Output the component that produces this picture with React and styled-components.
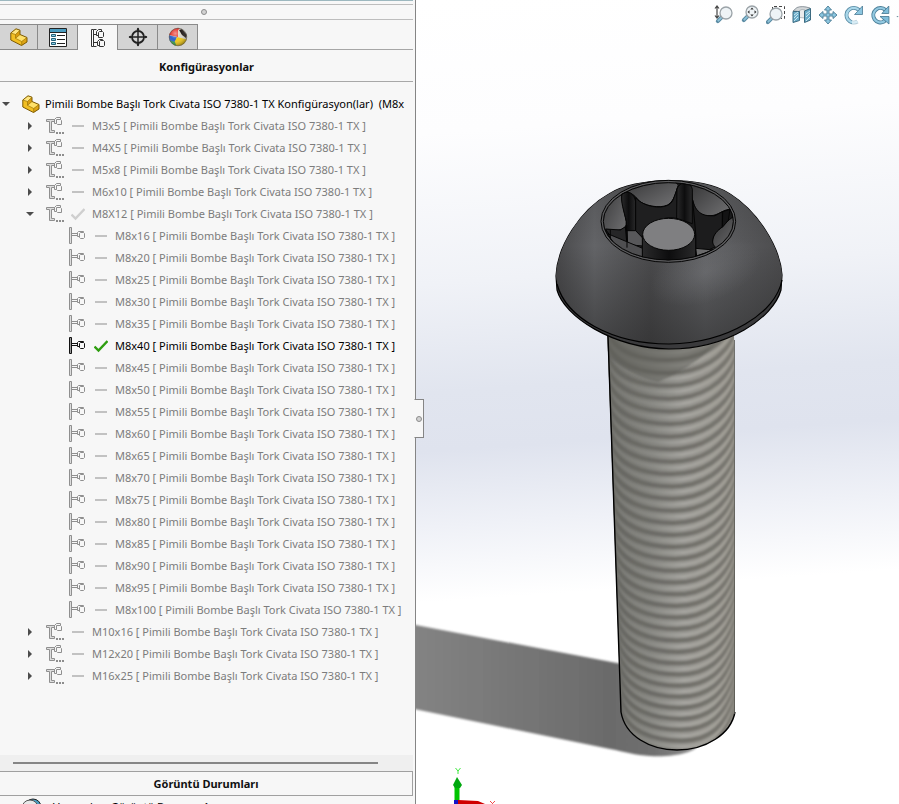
import React, { useState } from "react";
import styled, { createGlobalStyle } from "styled-components";

const Global = createGlobalStyle`
  * { box-sizing: border-box; }
  html, body, #root { height: 100%; }
  body {
    margin: 0;
    overflow: hidden;
    background: #fff;
    font: 11px/22px "Noto Sans", "Open Sans", sans-serif;
    color: #000;
  }
  button { font: inherit; color: inherit; padding: 0; margin: 0; border: 0; background: none; cursor: pointer; }
`;

const Window = styled.div`
  display: flex;
  height: 100vh;
  min-height: 480px;
`;

const Panel = styled.aside`
  position: relative;
  flex: 0 0 416px;
  display: flex;
  flex-direction: column;
  min-width: 0;
  padding-right: 2px;
  background: #f7f7f7;
  border-right: 1px solid #858585;
`;

const TopEdge = styled.div`
  flex: none;
  height: 5px;
  border-top: 1px solid #9db8bf;
  border-bottom: 1px solid #bdbdbd;
`;

const Grip = styled.div`
  flex: none;
  display: flex;
  align-items: center;
  justify-content: center;
  height: 15px;
  padding-right: 6px;
  border-bottom: 1px solid #bdbdbd;
`;

const GripDot = styled.span`
  width: 6px;
  height: 6px;
  border: 1px solid #8c8c8c;
  border-radius: 50%;
  background: #d2d2d2;
`;

const TabBar = styled.div`
  flex: none;
  display: flex;
  height: 30px;
  padding-top: 4px;
  background: linear-gradient(#a6a6a6, #a6a6a6) bottom / 100% 1px no-repeat;
`;

const Tab = styled.button`
  display: flex;
  align-items: center;
  justify-content: center;
  width: ${(p) => (p.$first ? 38 : 40)}px;
  border-top: 1px solid #8a8a8a;
  border-right: 1px solid #8a8a8a;
  border-bottom: ${(p) => (p.$active ? 0 : 1)}px solid #8a8a8a;
  background: ${(p) => (p.$active ? "#f7f7f7" : "#d4d4d4")};
`;

const PanelTitle = styled.h2`
  flex: none;
  margin: 0;
  height: 32px;
  font-size: 11px;
  line-height: 34px;
  font-weight: 700;
  text-align: center;
  color: #111;
  border-bottom: 1px solid #a8a8a8;
`;

const TreeArea = styled.div`
  flex: 1 1 0;
  min-height: 0;
  overflow: hidden;
  padding-top: 11px;
`;

const Branch = styled.ul`
  list-style: none;
  margin: 0;
  padding: 0;
`;

const Row = styled.div`
  display: flex;
  align-items: center;
  height: 22px;
  padding-left: ${(p) => [0, 24, 47][p.$depth]}px;
  white-space: pre;
  color: ${(p) => (p.$strong ? "#000" : "#7c7c7c")};
`;

const Toggle = styled.button`
  flex: none;
  display: flex;
  align-items: center;
  justify-content: center;
  width: 12px;
  height: 16px;
`;

const IconSlot = styled.span`
  flex: none;
  display: flex;
  width: 18px;
  margin-left: 10px;
`;

const ToggleSpace = styled.span`
  flex: none;
  width: 12px;
`;

const MarkSlot = styled.span`
  flex: none;
  display: flex;
  width: 14px;
  margin-left: 7px;
`;

const Label = styled.span`
  margin-left: ${(p) => (p.$root ? 5 : 7)}px;
`;

const ScrollTrack = styled.div`
  flex: none;
  height: 16px;
  padding: 7px 35px 0 13px;
  background: #efefef;
`;

const ScrollThumb = styled.div`
  height: 2px;
  background: #858585;
`;

const DisplayTitle = styled.h2`
  flex: none;
  margin: 0;
  height: 25px;
  font-size: 11px;
  line-height: 24px;
  font-weight: 700;
  text-align: center;
  color: #111;
  border: 1px solid #a0a0a0;
  border-left: 0;
`;

const DisplayRow = styled.div`
  flex: none;
  display: flex;
  gap: 12px;
  height: 8px;
  padding: 1px 0 0 21px;
  line-height: 20px;
  overflow: hidden;
`;

const Splitter = styled.button`
  position: absolute;
  top: 399px;
  right: -9px;
  z-index: 2;
  display: flex;
  align-items: center;
  justify-content: center;
  width: 10px;
  height: 39px;
  border: 1px solid #858585;
  border-left: 1px solid #f7f7f7;
  background: #f7f7f7;
`;

const Viewport = styled.main`
  position: relative;
  flex: 1 1 0;
  min-width: 0;
  overflow: hidden;
  background: linear-gradient(176deg, #fff 0%, #fdfdfe 16%, #f0f2f7 34%, #e1e5ef 47%, #dfe3ee 54%, #eff1f7 63%, #fff 72%);
`;

const Scene = styled.svg`
  position: absolute;
  inset: 0;
  width: 100%;
  height: 100%;
`;

const ViewTools = styled.div`
  position: relative;
  display: flex;
  justify-content: flex-end;
  gap: 6px;
  padding-top: 5px;
`;

const ToolButton = styled.button`
  display: flex;
  width: 20px;
  height: 20px;
`;

const MoreTools = styled.button`
  display: flex;
  width: 3px;
  height: 20px;
  overflow: hidden;
`;

/* ---------- panel icons ---------- */

function PartIcon() {
  return (
    <svg width="18" height="18" viewBox="0 0 18 18" strokeLinejoin="round">
      <path d="M.8 5 6 .800l4 1.400v4.300l7 3v4.500l-5.500 3.500L.800 12z" fill="#f2bf22" />
      <path d="M.8 5 6 .800l4 1.400L5.500 6.500z" fill="#ffe680" />
      <path d="m5.500 10.300 4.500-3.800 7 3-5.300 4z" fill="#ffe16a" />
      <path d="M5.500 6.500 10 2.200v4.300l-4.500 3.800z" fill="#d99d10" />
      <path d="M11.700 13.500 17 9.500V14l-5.500 3.500z" fill="#dda415" />
      <path d="M.8 5 6 .800l4 1.400v4.300l7 3v4.500l-5.500 3.500L.800 12z" fill="none" stroke="#7c5a05" />
      <path d="M.8 5l4.700 1.500L10 2.200M5.500 6.500v3.800l6.200 3.200v4M11.700 13.500 17 9.500M5.500 10.300 10 6.500" fill="none" stroke="#9b7408" strokeWidth=".7" />
    </svg>
  );
}

function PropertyIcon() {
  return (
    <svg width="18" height="19" viewBox="0 0 18 19">
      <path d="M.5.500h17v18H.500z" fill="#fff" stroke="#222" />
      <path d="M1 1h16v3H1z" fill="#4a9cc0" />
      <path d="M0 4h18v1H0z" fill="#222" />
      <g fill="#8ed0e6" stroke="#235f78">
        <path d="M2.500 6.500h4v2h-4zM2.500 10.500h4v2h-4zM2.500 14.500h4v2h-4z" />
      </g>
      <path d="M8 7.500h8M8 11.500h8M8 15.500h8" stroke="#222" />
    </svg>
  );
}

function ConfigTabIcon() {
  return (
    <svg width="16" height="20" viewBox="0 0 16 20" fill="none" stroke="#333">
      <path d="M1.500 18.500v-17h2v17zM3.500 6.500h3M3.500 14.500h4" fill="#fff" />
      <path d="M3.500 1.500h3M3.500 18.500h3" />
      <path d="M6.500 3.500l2-2h3v2M6.500 3.500v4h2" />
      <path d="M8.500 4.500l1-1h3l1 1v4l-1 1h-4z" fill="#f7f7f7" />
      <path d="M7.500 13.500l2-2h3v1M7.500 13.500v4h2" />
      <path d="M9.500 13.500l1-1h3l1 1v4l-1 1h-4z" fill="#f7f7f7" />
    </svg>
  );
}

function TargetIcon() {
  return (
    <svg width="20" height="20" viewBox="0 0 20 20" fill="none" stroke="#222" strokeWidth="1.800">
      <circle cx="10" cy="10" r="6" />
      <path d="M10 1v18M1 10h18" strokeWidth="1.500" />
      <path d="M10 .5 8.500 3h3zM10 19.500 8.500 17h3zM.5 10 3 8.500v3zM19.500 10 17 8.500v3z" fill="#222" stroke="none" />
    </svg>
  );
}

function AppearanceIcon() {
  return (
    <svg width="20" height="20" viewBox="0 0 20 20">
      <defs>
        <radialGradient id="ballShade" cx=".35" cy=".3" r=".75">
          <stop offset="0" stopColor="#fff" stopOpacity=".5" />
          <stop offset=".45" stopColor="#fff" stopOpacity="0" />
          <stop offset="1" stopColor="#000" stopOpacity=".4" />
        </radialGradient>
        <clipPath id="ballClip"><circle cx="10" cy="10" r="9" /></clipPath>
      </defs>
      <g clipPath="url(#ballClip)">
        <path d="M0 0h12l-2 10-9-2z" fill="#e2281f" />
        <path d="M0 8q5 1 9 2l-2 6-7-2z" fill="#2c62c9" />
        <path d="m9 10-5 10h16V12z" fill="#f0c916" />
        <path d="m0 13 7 2 2 6H0z" fill="#35a046" />
        <path d="m10 3 4-3h6v13l-10-3z" fill="#d9d4c9" />
        <path d="m11 3 3-1 5 6-1 3-4-3z" fill="#241d1a" />
      </g>
      <circle cx="10" cy="10" r="8.800" fill="url(#ballShade)" stroke="#57534a" strokeWidth=".6" />
    </svg>
  );
}

function Arrow({ open }) {
  return (
    <svg width="8" height="8" viewBox="0 0 8 8" fill="#4c4c4c">
      {open ? <path d="M0 2h8L4 6z" /> : <path d="M2 0v8l4-4z" />}
    </svg>
  );
}

function GroupIcon() {
  return (
    <svg width="18" height="18" viewBox="0 0 18 18" fill="none" stroke="#8f8f8f">
      <path d="M.5 2.500h8v2h-3v9h3v2h-5v-11h-3z" fill="#dedede" />
      <path d="M8.500 6.500v-4l2-2h4v2M8.500 6.500h2" />
      <path d="M10.500 2.500h4l1 1v4h-4l-1-1z" fill="#f7f7f7" />
      <path d="M10 15h2v2h-2zM13 15h2v2h-2zM16 15h2v2h-2z" fill="#8d8d8d" stroke="none" />
    </svg>
  );
}

function ConfigIcon({ active }) {
  return (
    <svg width="18" height="18" viewBox="0 0 18 18" fill="none" stroke={active ? "#111" : "#8f8f8f"}>
      <path d="M.5.500h2v16h-2z" fill={active ? "#999" : "#dedede"} />
      <path d="M2.500 6.500h6M2.500 8.500h6" />
      <path d="M8.500 9.500v-4l1-1h5v1M8.500 9.500h2" />
      <path d="M10.500 6.500l1-1h3l1 1v4l-1 1h-3l-1-1z" fill="#f7f7f7" />
    </svg>
  );
}

function Mark({ kind }) {
  return (
    <svg width="14" height="14" viewBox="0 0 14 14" fill="none">
      {kind === "dash" ? (
        <path d="M1 7h12" stroke="#c2c2c2" strokeWidth="2" />
      ) : (
        <path d="m.5 7.500 4 4 9-9.500" stroke={kind === "active" ? "#2e9e10" : "#cfcfcf"} strokeWidth="2.400" />
      )}
    </svg>
  );
}

/* ---------- view toolbar icons ---------- */

function Lens({ x, y, r = 6 }) {
  const k = r * 0.7;
  return (
    <g>
      <path d={`M${x - k} ${y + k} L${x - k - 4} ${y + k + 4}`} stroke="#5b8ba3" strokeWidth="4" strokeLinecap="round" />
      <path d={`M${x - k} ${y + k} L${x - k - 4} ${y + k + 4}`} stroke="#8fc3da" strokeWidth="1.800" />
      <circle cx={x} cy={y} r={r} fill="#eef3f6" stroke="#9ba3a8" strokeWidth="1.300" />
    </g>
  );
}

const toolIcons = {
  "Yakınlaştır/Uzaklaştır": (
    <>
      <Lens x={12} y={8} />
      <path d="M3 2v10M1 3.500 3 1l2 2.500M1 10.500 3 13l2-2.500" fill="none" stroke="#444" strokeWidth="1.200" />
    </>
  ),
  "Ekrana Sığdır": (
    <>
      <Lens x={12} y={7} />
      <path d="m12 2.500-1.700 2h3.400zM12 11.500l-1.700-2h3.400zM7.500 7l2-1.700v3.400zM16.500 7l-2-1.700v3.400z" fill="#333" />
    </>
  ),
  "Alana Yakınlaştır": (
    <>
      <path d="M6.500 5V1.500h12v12H15" fill="none" stroke="#444" strokeDasharray="3 2" />
      <Lens x={10} y={9} />
    </>
  ),
  "Kesit Görünümü": (
    <>
      <path d="m1 6 4-3.500Q10 .5 18 3v11l-5 2V7z" fill="#d3d7d9" stroke="#77828a" strokeWidth=".8" />
      <path d="M7.500 5.500Q10 3.500 13 5v8l-5.500-.5z" fill="#e9ebec" stroke="#98a1a6" strokeWidth=".7" />
      <path d="M1 6.500h6.500v9L1 17.500zM12.500 6l6-2.500V15l-6 2.500z" fill="#6badca" stroke="#3c6a80" />
      <path d="m2 10 4-3M2 13l4-4M2 16l4-4M14 9l4-3M14 12l4-4M14 16l4-4" stroke="#d7edf5" strokeWidth=".9" />
    </>
  ),
  Kaydır: (
    <path d="m10 1 3.500 4H11v4h4V6.500l4 3.500-4 3.500V11h-4v4h2.500L10 19l-3.500-4H9v-4H5v2.500L1 10l4-3.500V9h4V5H6.500z" fill="#8cc6e0" stroke="#4a7a93" strokeWidth=".9" />
  ),
  Döndür: (
    <>
      <path d="M13.500 16.500A7.300 7.300 0 1 1 15 5" fill="none" stroke="#5689a2" strokeWidth="4" />
      <path d="M13.500 16.500A7.300 7.300 0 1 1 15 5" fill="none" stroke="#a9d7ea" strokeWidth="2.400" />
      <path d="M18.500 1v8.500H10.500l3-3z" fill="#8cc6e0" stroke="#4a7a93" strokeWidth=".8" />
      <path d="m8 14 9-1-1 7H8z" fill="#fff" opacity=".55" />
    </>
  ),
  "Görünümü Yuvarla": (
    <>
      <path d="M15.500 5A7.200 7.200 0 1 0 14 16.500L16 13" fill="none" stroke="#4b7f98" strokeWidth="4" />
      <path d="M15.500 5A7.200 7.200 0 1 0 14 16.500L16 13" fill="none" stroke="#93c9e1" strokeWidth="2.200" />
      <path d="M18.800 1v7.500h-7zM10 11.500h9V19z" fill="#7fbdda" stroke="#44758e" strokeWidth=".8" />
    </>
  ),
};

/* ---------- 3D model ---------- */

const THREADS = Array.from({ length: 37 }, (_, i) => ({
  y: 334 + i * 13.1 - i * i * 0.0335,
  left: 605 + (i / 36) * 15,
  ry: 31 + (i / 36) * 5,
}));

function threadPath({ y, left, ry }, dy) {
  const b = y + dy;
  return `M${left} ${b - ry} C${left + 8} ${b - ry * 0.22} ${left + 36} ${b} ${left + 62} ${b} C${left + 92} ${b} 726 ${b - ry * 0.45} 737 ${b - ry - 12}`;
}

const SHANK = "M607 325 L621 712 C625 736 650 750 677 750 C706 750 731 734 735 712 L734 325Z";
const HEAD =
  "M556 276 C557 247 580 210 609 194 C635 177 702 175 730 194 C757 211 780 246 782 275 L781 290 C773 318 728 349 669 349 C612 348 564 316 557 290Z";
const DOME =
  "M556 276 C557 247 580 210 609 194 C635 177 702 175 730 194 C757 211 780 246 782 275 C780 310 733 343 669 344 C606 344 561 312 556 276Z";

function Model() {
  return (
    <Scene viewBox="416 0 483 804" preserveAspectRatio="xMidYMid meet" role="img" aria-label="Pimili bombe başlı tork civata">
      <defs>
        <linearGradient id="floorShadow" x1="0" x2="1">
          <stop offset="0" stopColor="#858585" />
          <stop offset=".7" stopColor="#6b6b6b" />
          <stop offset=".85" stopColor="#6f6f6f" />
          <stop offset="1" stopColor="#8c8c8c" />
        </linearGradient>
        <linearGradient id="steel" x1="0" x2="1">
          <stop offset="0" stopColor="#6c6c67" />
          <stop offset=".3" stopColor="#7f7f7a" />
          <stop offset=".55" stopColor="#92918c" />
          <stop offset=".8" stopColor="#95938d" />
          <stop offset="1" stopColor="#8c8a83" />
        </linearGradient>
        <linearGradient id="groove" gradientUnits="userSpaceOnUse" x1="607" x2="735" y1="0" y2="0">
          <stop offset="0" stopColor="#666661" />
          <stop offset=".5" stopColor="#6e6d68" />
          <stop offset="1" stopColor="#7a7871" />
        </linearGradient>
        <linearGradient id="ridge" gradientUnits="userSpaceOnUse" x1="607" x2="735" y1="0" y2="0">
          <stop offset="0" stopColor="#757570" />
          <stop offset=".35" stopColor="#8c8c87" />
          <stop offset=".6" stopColor="#a8a7a2" />
          <stop offset="1" stopColor="#9f9c93" />
        </linearGradient>
        <linearGradient id="dome" x1="0" x2="1">
          <stop offset="0" stopColor="#48484a" />
          <stop offset=".17" stopColor="#636467" />
          <stop offset=".42" stopColor="#4c4c4e" />
          <stop offset=".66" stopColor="#626366" />
          <stop offset="1" stopColor="#4c4c4e" />
        </linearGradient>
        <linearGradient id="domeFall" x1="0" y1="0" x2="0" y2="1">
          <stop offset="0" stopColor="#222" stopOpacity=".2" />
          <stop offset=".4" stopColor="#222" stopOpacity="0" />
          <stop offset="1" stopColor="#222" stopOpacity=".5" />
        </linearGradient>
        <radialGradient id="domeGlow" gradientUnits="userSpaceOnUse" cx="0" cy="0" r="1" gradientTransform="translate(706 272) rotate(-20) scale(58 30)">
          <stop offset="0" stopColor="#8a8b8f" stopOpacity=".28" />
          <stop offset="1" stopColor="#8a8b8f" stopOpacity="0" />
        </radialGradient>
        <linearGradient id="facet" x1="0" x2="1" y1="0" y2="1">
          <stop offset="0" stopColor="#303031" />
          <stop offset="1" stopColor="#737375" />
        </linearGradient>
        <linearGradient id="lobeWall" x1="0" x2="1">
          <stop offset="0" stopColor="#2a2a2b" />
          <stop offset=".5" stopColor="#0d0d0e" />
          <stop offset="1" stopColor="#29292a" />
        </linearGradient>
        <filter id="soft" x="-10%" y="-10%" width="120%" height="120%">
          <feGaussianBlur stdDeviation="1" />
        </filter>
        <clipPath id="shankClip"><path d={SHANK} /></clipPath>
        <clipPath id="socketClip"><ellipse cx="385" cy="154" rx="196" ry="117" /></clipPath>
      </defs>

      <path filter="url(#soft)" d="M400 622 L622 664 L690 740 C710 746 685 758 650 756 C635 755 625 752 610 749 L400 706Z" fill="url(#floorShadow)" />

      <path d={SHANK} fill="url(#steel)" />
      <g clipPath="url(#shankClip)">
        <g fill="none" filter="url(#soft)">
          {THREADS.map((t) => (
            <g key={t.y}>
              <path d={threadPath(t, 0)} stroke="url(#groove)" strokeWidth="4" />
              <path d={threadPath(t, 6)} stroke="url(#ridge)" strokeWidth="3" />
            </g>
          ))}
        </g>
        <path filter="url(#soft)" d="M600 330H728Q700 365 658 382Q630 376 600 350Z" fill="#5c5c57" opacity=".5" />
      </g>
      <path d="M608 336 621 712C625 736 650 750 677 750C706 750 731 734 735 712" fill="none" stroke="#000" strokeWidth="1.400" />
      <path d="M734.500 340V714" stroke="#55554f" strokeWidth=".8" />

      <path d={HEAD} fill="#3a3a3c" stroke="#000" strokeWidth="1.200" />
      <path d={DOME} fill="url(#dome)" />
      <path d={DOME} fill="url(#domeFall)" />
      <path d={DOME} fill="url(#domeGlow)" />
      <path d="M557 284 C566 318 612 344 669 344 C728 343 776 313 782 280" fill="none" stroke="#000" strokeWidth="1.200" />

      <g transform="translate(540 170) scale(.33333)" stroke="#050505" strokeWidth="3">
        <ellipse cx="385" cy="154" rx="202" ry="123" fill="#5b5b5d" />
        <g clipPath="url(#socketClip)">
          <rect x="180" y="30" width="410" height="250" fill="#1a1a1b" stroke="none" />
          <path d="M180 30H252C235 75 254 125 259 155C262 180 235 185 200 178L180 200Z" fill="url(#facet)" />
          <path d="M245 70C275 60 287 82 300 95C325 112 375 116 390 100C407 82 408 62 415 45L390 20H250Z" fill="url(#facet)" />
          <path d="M450 30 457 90C467 132 485 138 510 137C536 138 552 114 575 119L580 20Z" fill="url(#facet)" />
          <path d="M590 135C555 152 555 170 530 182C508 210 526 223 508 240L560 250 600 170Z" fill="url(#facet)" />
          <path d="M246 72C267 55 287 78 287 99V184L259 181V155C252 122 241 95 246 72Z" fill="url(#lobeWall)" />
          <path d="M287 83C310 112 383 125 399 90L412 55V146C382 138 320 148 307 205L287 184Z" fill="#1f1f20" />
          <path d="M411 59C417 32 451 32 457 58V161L410 145Z" fill="url(#lobeWall)" />
          <path d="M458 90C470 140 503 138 525 137L547 125V171C515 193 512 220 526 231L467 257V190Z" fill="#1c1c1d" />
          <path d="M548 125 570 118 565 151 547 172Z" fill="#131314" />
          <path d="M196 177 241 180 256 170 261 225 307 225V265L230 225Z" fill="#262627" />
          <path d="M261 182 287 182 308 204V228L263 224Z" fill="#58585a" />
          <path d="M205 192 308 235V270L230 240Z" fill="#4f4f51" />
          <path d="M467 235 520 240 470 258Z" fill="#6a6a6b" />
          <path d="M307 194V290H467V194Z" fill="url(#lobeWall)" />
          <path d="M211 180V210M261 165V233" fill="none" />
        </g>
        <ellipse cx="386" cy="193" rx="78" ry="48" fill="#7f7f81" />
        <ellipse cx="385" cy="154" rx="195" ry="116" fill="none" />
      </g>

      <g>
        <path d="M454.500 783h5v20h-5z" fill="#00c400" />
        <path d="m457 777 5 8-2 3h-5l-2-3z" fill="#00a80f" />
        <path d="M454 800h5v5h-5z" fill="#1414c8" />
        <path d="m458 800 20 1 7 3H458z" fill="#d00000" />
        <path d="m455.500 768 2.500 3 2.500-3M458 771v3" fill="none" stroke="#3ee83e" />
        <path d="m490 801 5 5M495 801l-5 5" stroke="#f04a4a" />
      </g>
    </Scene>
  );
}

/* ---------- data ---------- */

const SUFFIX = " [ Pimili Bombe Başlı Tork Civata ISO 7380-1 TX ]";
const CHILDREN = [16, 20, 25, 30, 35, 40, 45, 50, 55, 60, 65, 70, 75, 80, 85, 90, 95, 100].map((n) => `M8x${n}`);
const GROUPS = ["M3x5", "M4X5", "M5x8", "M6x10", "M8X12", "M10x16", "M12x20", "M16x25"];
const TABS = [
  ["Unsur Ağacı", PartIcon],
  ["Özellikler", PropertyIcon],
  ["Konfigürasyonlar", ConfigTabIcon],
  ["Ölçü Uzmanı", TargetIcon],
  ["Görünümler", AppearanceIcon],
];

function Group({ name, nested }) {
  const [open, setOpen] = useState(Boolean(nested));
  return (
    <li role="treeitem" aria-expanded={open}>
      <Row $depth={1}>
        <Toggle aria-label={name} onClick={() => setOpen(!open)}>
          <Arrow open={open} />
        </Toggle>
        <IconSlot><GroupIcon /></IconSlot>
        <MarkSlot><Mark kind={nested ? "check" : "dash"} /></MarkSlot>
        <Label>{name + SUFFIX}</Label>
      </Row>
      {open && nested && (
        <Branch role="group">
          {nested.map((child) => {
            const active = child === "M8x40";
            return (
              <li role="treeitem" aria-selected={active} key={child}>
                <Row $depth={2} $strong={active}>
                  <ToggleSpace />
                  <IconSlot><ConfigIcon active={active} /></IconSlot>
                  <MarkSlot><Mark kind={active ? "active" : "dash"} /></MarkSlot>
                  <Label>{child + SUFFIX}</Label>
                </Row>
              </li>
            );
          })}
        </Branch>
      )}
    </li>
  );
}

export default function App() {
  const [tab, setTab] = useState(2);
  return (
    <>
      <Global />
      <Window>
        <Panel>
          <TopEdge />
          <Grip><GripDot /></Grip>
          <TabBar role="tablist">
            {TABS.map(([label, Icon], i) => (
              <Tab key={label} role="tab" aria-label={label} aria-selected={tab === i} $first={i === 0} $active={tab === i} onClick={() => setTab(i)}>
                <Icon />
              </Tab>
            ))}
          </TabBar>
          <PanelTitle>Konfigürasyonlar</PanelTitle>
          <TreeArea>
            <Branch role="tree">
              <li role="treeitem" aria-expanded="true">
                <Row $depth={0} $strong>
                  <Toggle aria-label="Pimili Bombe Başlı Tork Civata"><Arrow open /></Toggle>
                  <IconSlot><PartIcon /></IconSlot>
                  <Label $root>{"Pimili Bombe Başlı Tork Civata ISO 7380-1 TX Konfigürasyon(lar)  (M8x"}</Label>
                </Row>
                <Branch role="group">
                  {GROUPS.map((name) => (
                    <Group key={name} name={name} nested={name === "M8X12" ? CHILDREN : undefined} />
                  ))}
                </Branch>
              </li>
            </Branch>
          </TreeArea>
          <ScrollTrack><ScrollThumb /></ScrollTrack>
          <DisplayTitle>Görüntü Durumları</DisplayTitle>
          <DisplayRow>
            <svg width="20" height="20" viewBox="0 0 20 20">
              <circle cx="12" cy="10" r="8" fill="#4a9cc0" stroke="#222" />
              <circle cx="9" cy="11" r="8" fill="#e8e8e8" stroke="#555" />
            </svg>
            <span>Varsayılan_Görüntü Durumu 1</span>
          </DisplayRow>
          <Splitter aria-label="Paneli daralt"><GripDot /></Splitter>
        </Panel>
        <Viewport>
          <Model />
          <ViewTools role="toolbar" aria-label="Görünüm araçları">
            {Object.entries(toolIcons).map(([name, drawing]) => (
              <ToolButton key={name} aria-label={name}>
                <svg width="20" height="20" viewBox="0 0 20 20">{drawing}</svg>
              </ToolButton>
            ))}
            <MoreTools aria-label="Diğer">
              <svg width="8" height="20" viewBox="0 0 8 20"><path d="M1 13h6l-3 3z" fill="#41697c" /></svg>
            </MoreTools>
          </ViewTools>
        </Viewport>
      </Window>
    </>
  );
}
